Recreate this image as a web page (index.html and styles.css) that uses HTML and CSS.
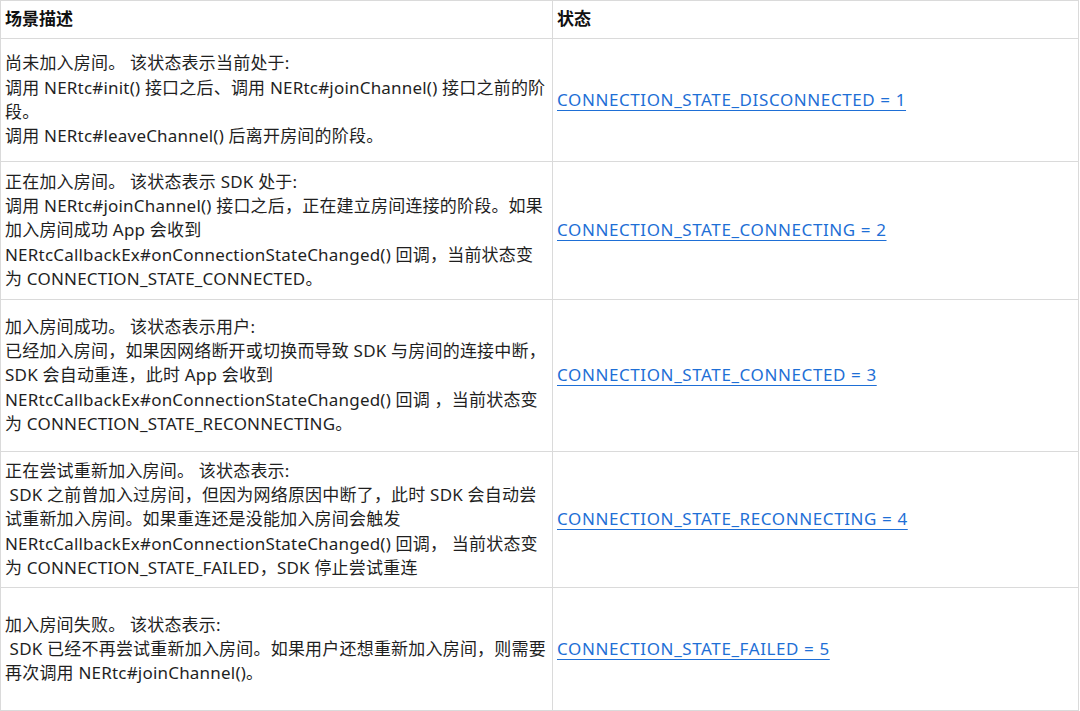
FILE: index.html
```html
<!DOCTYPE html>
<html lang="zh-CN">
<head>
  <meta charset="UTF-8">
  <title>连接状态</title>
  <link rel="stylesheet" href="styles.css">
</head>
<body>

<table class="states">
  <thead>
    <tr class="head-row">
      <th class="col-desc">场景描述</th>
      <th class="col-state">状态</th>
    </tr>
  </thead>
  <tbody>
    <tr class="row-1">
      <td>尚未加入房间。 该状态表示当前处于:<br>
        调用 NERtc#init() 接口之后、调用 NERtc#joinChannel() 接口之前的阶<br>
        段。<br>
        调用 NERtc#leaveChannel() 后离开房间的阶段。</td>
      <td><a href="#">CONNECTION_STATE_DISCONNECTED = 1</a></td>
    </tr>
    <tr class="row-2">
      <td>正在加入房间。 该状态表示 SDK 处于:<br>
        调用 NERtc#joinChannel() 接口之后，正在建立房间连接的阶段。如果<br>
        加入房间成功 App 会收到<br>
        NERtcCallbackEx#onConnectionStateChanged() 回调，当前状态变<br>
        为 CONNECTION_STATE_CONNECTED。</td>
      <td><a href="#">CONNECTION_STATE_CONNECTING = 2</a></td>
    </tr>
    <tr class="row-3">
      <td>加入房间成功。 该状态表示用户:<br>
        已经加入房间，如果因网络断开或切换而导致 SDK 与房间的连接中断，<br>
        SDK 会自动重连，此时 App 会收到<br>
        NERtcCallbackEx#onConnectionStateChanged() 回调 ，当前状态变<br>
        为 CONNECTION_STATE_RECONNECTING。</td>
      <td><a href="#">CONNECTION_STATE_CONNECTED = 3</a></td>
    </tr>
    <tr class="row-4">
      <td>正在尝试重新加入房间。 该状态表示:<br>
        &nbsp;SDK 之前曾加入过房间，但因为网络原因中断了，此时 SDK 会自动尝<br>
        试重新加入房间。如果重连还是没能加入房间会触发<br>
        NERtcCallbackEx#onConnectionStateChanged() 回调， 当前状态变<br>
        为 CONNECTION_STATE_FAILED，SDK 停止尝试重连</td>
      <td><a href="#">CONNECTION_STATE_RECONNECTING = 4</a></td>
    </tr>
    <tr class="row-5">
      <td>加入房间失败。 该状态表示:<br>
        &nbsp;SDK 已经不再尝试重新加入房间。如果用户还想重新加入房间，则需要<br>
        再次调用 NERtc#joinChannel()。</td>
      <td><a href="#">CONNECTION_STATE_FAILED = 5</a></td>
    </tr>
  </tbody>
</table>

</body>
</html>
```

FILE: styles.css
```css
body {
  margin: 0;
  background-color: #fff;
  font-family: "Noto Sans", "Noto Sans CJK SC", sans-serif;
  color: #1f1f1f;
}

.states {
  width: 1079px;
  border-collapse: collapse;
  font-size: 17px;
  line-height: 24.3px;
}

.states th,
.states td {
  border: 1px solid #dadada;
  padding: 0 4px;
  vertical-align: middle;
  text-align: left;
  white-space: nowrap;
}

.states td {
  letter-spacing: 0.2px;
}

.states th {
  font-weight: bold;
  color: #111;
}

.col-desc {
  width: 543px;
}

.head-row { height: 38px; }
.row-1 { height: 123px; }
.row-2 { height: 138px; }
.row-3 { height: 152px; }
.row-4 { height: 136px; }
.row-5 { height: 123px; }

.states a {
  color: #1e6fd6;
  letter-spacing: 0.6px;
  text-decoration: underline;
  text-underline-offset: 4px;
}
```
